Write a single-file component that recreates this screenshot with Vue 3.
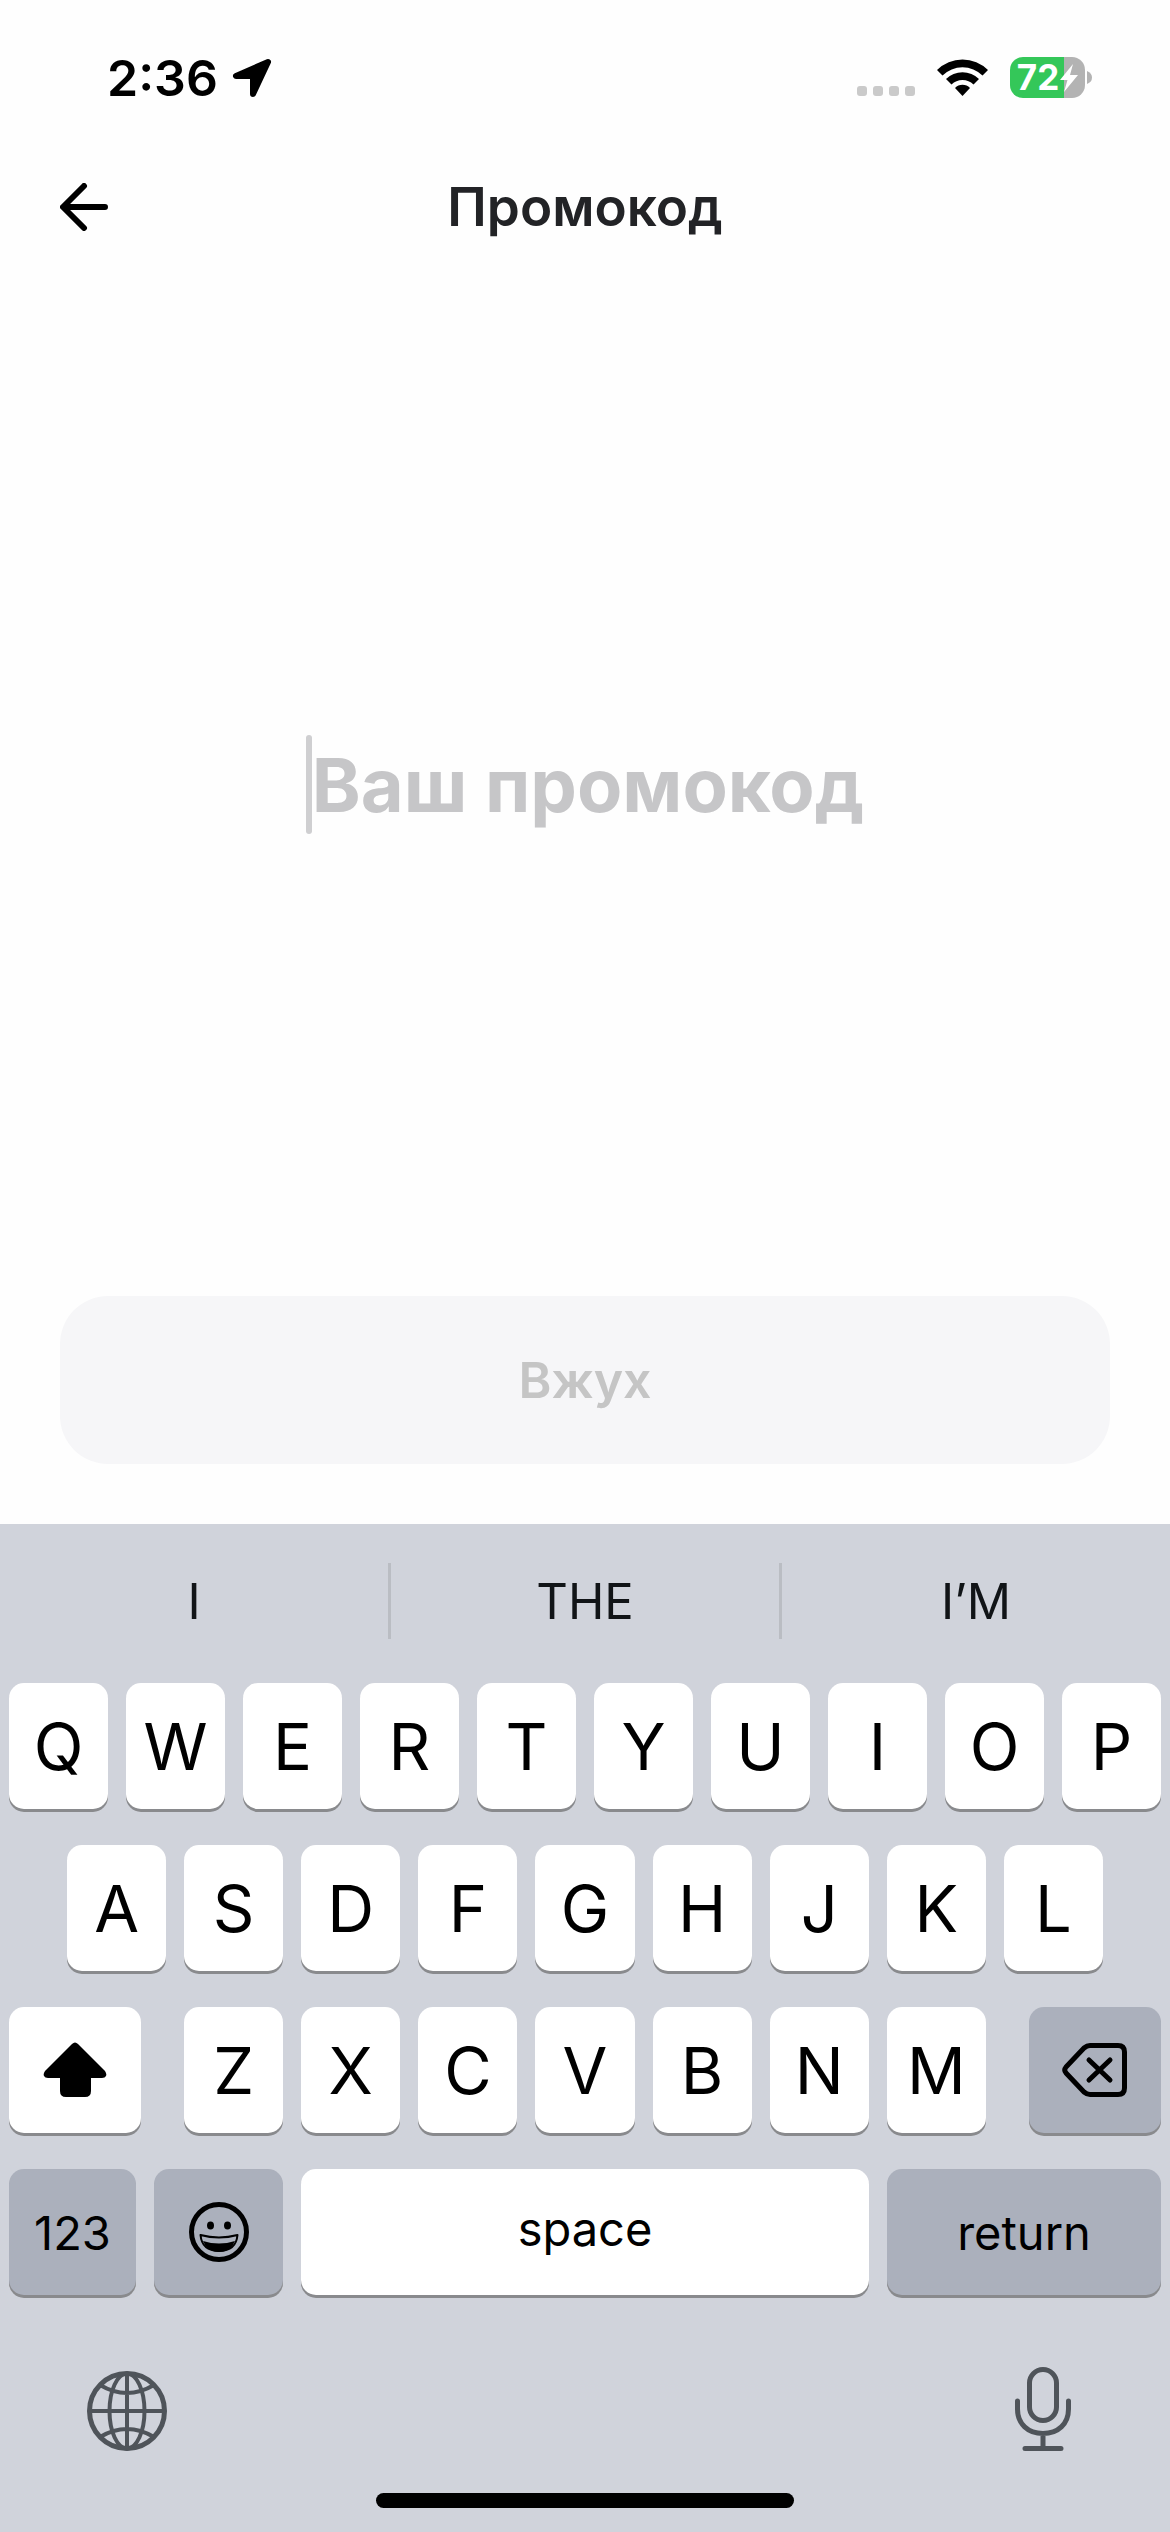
<script setup>
import { ref } from 'vue'

const code = ref('')
const suggestions = ['I', 'THE', 'I’M']
const topRow = [...'QWERTYUIOP']
const middleRow = [...'ASDFGHJKL']
const bottomRow = [...'ZXCVBNM']
</script>

<template>
  <div class="screen">
    <div class="status">
      <div class="status-side">
        <span class="time">2:36</span>
        <svg class="location" viewBox="0 0 40 40" width="40" height="40" aria-hidden="true">
          <path d="M36 4 L4 18 H21 V36 Z" fill="#000" stroke="#000" stroke-width="6" stroke-linejoin="round" />
        </svg>
      </div>
      <div class="status-side">
        <div class="signal"><i v-for="n in 4" :key="n"></i></div>
        <svg class="wifi" viewBox="0 0 51 37" width="51" height="37" aria-hidden="true">
          <path d="M0 11 A36 36 0 0 1 51 11 L45.500 16.500 A28.500 28.500 0 0 0 5.500 16.500 Z" />
          <path d="M9 20 A23.500 23.500 0 0 1 42 20 L36.500 25.500 A15.500 15.500 0 0 0 14.500 25.500 Z" />
          <path d="M18 29 A10.500 10.500 0 0 1 33 29 L25.500 37 Z" />
        </svg>
        <div class="battery">
          <div class="battery-body">
            <span>72</span>
            <svg viewBox="0 0 18 28" width="18" height="28" aria-hidden="true">
              <path d="M13 0 L0 16 H7.500 L4 28 L18 11 H10 Z" fill="#fff" />
            </svg>
          </div>
          <svg viewBox="0 0 5 13" width="5" height="13" aria-hidden="true"><path d="M0 0 Q5 2 5 6.500 Q5 11 0 13 Z" fill="#b3b3b3" /></svg>
        </div>
      </div>
    </div>

    <header class="header">
      <button class="back" type="button" aria-label="Назад">
        <svg viewBox="0 0 48 48" width="48" height="48" fill="none" stroke="#000" stroke-width="6" stroke-linecap="round" stroke-linejoin="round">
          <path d="M24 3 L3 24 L24 45 M4 24 H45" />
        </svg>
      </button>
      <h1>Промокод</h1>
    </header>

    <main class="main">
      <div class="field">
        <span class="caret"></span>
        <input v-model="code" type="text" placeholder="Ваш промокод" aria-label="Ваш промокод" />
      </div>
      <button class="submit" type="button" disabled>Вжух</button>
    </main>

    <section class="keyboard">
      <div class="suggestions">
        <button v-for="word in suggestions" :key="word" type="button">{{ word }}</button>
      </div>
      <div class="rows">
        <div class="row">
          <button v-for="k in topRow" :key="k" class="key" type="button">{{ k }}</button>
        </div>
        <div class="row inset">
          <button v-for="k in middleRow" :key="k" class="key" type="button">{{ k }}</button>
        </div>
        <div class="row spread">
          <button class="key shift" type="button" aria-label="shift">
            <svg viewBox="0 0 64 56" width="64" height="56">
              <path d="M29 2 Q32 -1 35 2 L62 29 Q64 32 63 34 Q62 36 59 36 H48 V49 Q48 55 42 55 H23 Q17 55 17 49 V36 H5 Q2 36 1 34 Q0 32 2 29 Z" />
            </svg>
          </button>
          <div class="row letters">
            <button v-for="k in bottomRow" :key="k" class="key" type="button">{{ k }}</button>
          </div>
          <button class="key dark delete" type="button" aria-label="delete">
            <svg viewBox="0 0 65 54" width="65" height="54" fill="none" stroke="#000" stroke-width="5" stroke-linecap="round" stroke-linejoin="round">
              <path d="M28 2.500 H56 Q62.500 2.500 62.500 9 V45 Q62.500 51.500 56 51.500 H28 Q25 51.500 22 49 L4 30 Q1.500 27 4 24 L22 5 Q25 2.500 28 2.500 Z" />
              <path d="M27 17 L48 37 M48 17 L27 37" />
            </svg>
          </button>
        </div>
        <div class="row">
          <button class="key dark label numbers" type="button">123</button>
          <button class="key dark emoji" type="button" aria-label="emoji">
            <svg viewBox="0 0 60 60" width="60" height="60">
              <circle cx="30" cy="30" r="27.500" fill="none" stroke="#000" stroke-width="5" />
              <ellipse cx="21.500" cy="23.500" rx="3.500" ry="4" />
              <ellipse cx="38.500" cy="23.500" rx="3.500" ry="4" />
              <path d="M11.500 33 Q30 38 48.500 33 Q47 49 30 49 Q13 49 11.500 33 Z" fill="none" stroke="#000" stroke-width="2" stroke-linejoin="round" />
              <path d="M14 39 Q30 44 46 39 Q42 50 30 50 Q18 50 14 39 Z" />
            </svg>
          </button>
          <button class="key label space" type="button">space</button>
          <button class="key dark label return" type="button">return</button>
        </div>
      </div>
      <div class="tools">
        <button type="button" aria-label="Next keyboard">
          <svg viewBox="0 0 80 80" width="80" height="80" fill="none" stroke="#4f545a" stroke-width="4">
            <circle cx="40" cy="40" r="37.500" stroke-width="5" />
            <ellipse cx="40" cy="40" rx="17.500" ry="37.500" />
            <path d="M40 2 V78 M2 40 H78 M13 14 Q40 30 67 14 M13 66 Q40 50 67 66" />
          </svg>
        </button>
        <button type="button" aria-label="Dictation">
          <svg viewBox="0 0 56 84" width="56" height="84" fill="none" stroke="#4f545a" stroke-width="5" stroke-linecap="round">
            <rect x="14.500" y="2.500" width="27" height="51" rx="13.500" />
            <path d="M2.500 34 V42 C2.500 57 13 66.500 28 66.500 C43 66.500 53.500 57 53.500 42 V34 M28 67 V80 M10 81.500 H46" />
          </svg>
        </button>
      </div>
      <div class="home"></div>
    </section>
  </div>
</template>

<style>
body {
  margin: 0;
  background: #fff;
}
</style>

<style scoped>
.screen {
  display: flex;
  flex-direction: column;
  min-height: 100vh;
  font-family: Inter, "Liberation Sans", sans-serif;
  color: #000;
  background: #fefefe;
}
button {
  margin: 0;
  padding: 0;
  border: 0;
  background: none;
  font: inherit;
  color: inherit;
}
svg {
  display: block;
}
.status {
  display: flex;
  justify-content: space-between;
  align-items: center;
  box-sizing: border-box;
  height: 141px;
  padding: 14px 78px 0 107px;
}
.status-side {
  display: flex;
  align-items: center;
}
.time {
  font-size: 50px;
  font-weight: 600;
  line-height: 60px;
}
.location {
  margin-left: 14px;
}
.signal {
  display: flex;
  gap: 6px;
  padding-top: 26px;
}
.signal i {
  width: 10px;
  height: 10px;
  border-radius: 3px;
  background: #cacaca;
}
.wifi {
  margin: 0 22px;
}
.battery {
  display: flex;
  align-items: center;
  gap: 2px;
}
.battery-body {
  display: flex;
  align-items: center;
  justify-content: center;
  gap: 1px;
  width: 75px;
  height: 41px;
  border-radius: 13px;
  background: linear-gradient(90deg, #34c759 72%, #b3b3b3 72%);
  color: #fff;
  font-size: 35px;
  font-weight: 700;
  line-height: 41px;
}
.header {
  display: grid;
  grid-template-columns: 48px 1fr 48px;
  align-items: center;
  height: 132px;
  padding: 0 60px;
}
h1 {
  margin: 0;
  text-align: center;
  font-size: 53px;
  font-weight: 600;
  line-height: 64px;
  color: #222326;
}
.main {
  flex: 1;
  display: flex;
  flex-direction: column;
  padding: 0 60px 60px;
}
.field {
  flex: 1;
  display: flex;
  align-items: center;
  justify-content: center;
}
.caret {
  width: 6px;
  height: 99px;
  border-radius: 3px;
  background: #cfcfd1;
}
.field input {
  field-sizing: content;
  padding: 0;
  border: 0;
  outline: 0;
  background: none;
  font: inherit;
  font-size: 74px;
  font-weight: 700;
  line-height: 96px;
  color: #222326;
}
.field input::placeholder {
  color: #c6c6c8;
  opacity: 1;
}
.submit {
  height: 168px;
  border-radius: 48px;
  background: #f6f6f8;
  color: #c5c5c5;
  font-size: 50px;
  font-weight: 600;
}
.keyboard {
  padding-bottom: 24px;
  background: #d0d3db;
}
.suggestions {
  display: flex;
  padding: 39px 0 44px;
}
.suggestions button {
  flex: 1;
  height: 76px;
  font-size: 49px;
  color: #111417;
}
.suggestions button + button {
  border-left: 3px solid #babdc3;
}
.rows {
  display: flex;
  flex-direction: column;
  gap: 36px;
  padding: 0 9px;
}
.row {
  display: flex;
  gap: 18px;
}
.inset {
  padding: 0 58px;
}
.spread {
  gap: 43px;
}
.key {
  display: flex;
  align-items: center;
  justify-content: center;
  flex: 1 1 0;
  min-width: 0;
  height: 126px;
  border-radius: 15px;
  background: #fff;
  box-shadow: 0 3px 0 #898a8d;
  font-size: 65px;
}
.dark {
  background: #abb0bc;
}
.label {
  font-size: 47px;
}
.shift,
.delete {
  flex-grow: 132;
}
.letters {
  flex: 801 1 0;
}
.numbers {
  flex-grow: 127;
}
.emoji {
  flex-grow: 129;
}
.space {
  flex-grow: 568;
  box-sizing: border-box;
  padding-bottom: 8px;
}
.return {
  flex-grow: 274;
}
.tools {
  display: flex;
  justify-content: space-between;
  align-items: flex-end;
  padding: 72px 85px 42px;
}
.tools button {
  display: flex;
  align-items: flex-end;
  justify-content: center;
  width: 84px;
  height: 84px;
}
.home {
  height: 15px;
  margin: 0 376px;
  border-radius: 8px;
  background: #000;
}
</style>
